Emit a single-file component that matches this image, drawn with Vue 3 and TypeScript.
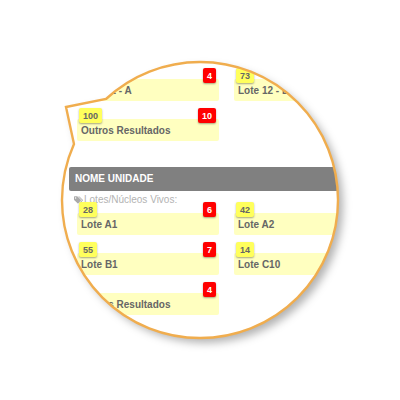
<script setup lang="ts">
interface Lot {
  name: string
  code?: number
  alerts?: number
}

const previousLots: Lot[] = [
  { name: 'Lote 12 - A', alerts: 4 },
  { name: 'Lote 12 - B', code: 73 },
  { name: 'Outros Resultados', code: 100, alerts: 10 },
]

const unitLots: Lot[] = [
  { name: 'Lote A1', code: 28, alerts: 6 },
  { name: 'Lote A2', code: 42 },
  { name: 'Lote B1', code: 55, alerts: 7 },
  { name: 'Lote C10', code: 14 },
  { name: 'Outros Resultados', alerts: 4 },
]
</script>

<template>
  <main class="page">
    <div class="bubble">
      <svg class="shadow" viewBox="0 0 280 280" aria-hidden="true">
        <path d="M46 39A138 138 0 0 1 140 2A138 138 0 0 1 278 140A138 138 0 0 1 140 278A138 138 0 0 1 2 140A138 138 0 0 1 14 84L6 47Z" fill="#fff" />
      </svg>
      <div class="content">
        <ul class="lots">
          <li v-for="lot in previousLots" :key="lot.name" class="lot">
            <span v-if="lot.code" class="badge code">{{ lot.code }}</span>
            <span v-if="lot.alerts" class="badge alerts">{{ lot.alerts }}</span>
            <span>{{ lot.name }}</span>
          </li>
        </ul>
        <section class="unit">
          <h2>NOME UNIDADE</h2>
          <p class="caption">
            <svg class="tags" viewBox="0 0 16 13" aria-hidden="true">
              <path fill-rule="evenodd" d="M0 1.2Q0 0 1.2 0H5.4Q6.2 0 6.8 .6L12.2 6Q13 6.8 12.2 7.6L7.8 12.2Q7 13 6.2 12.2L.7 6.8Q0 6.2 0 5.4ZM2.9 1.7A1.2 1.2 0 1 0 2.9 4.1A1.2 1.2 0 1 0 2.9 1.7Z" />
              <path d="M7.6 0H8.7Q9.5 0 10.1 .6L15.5 6Q16.3 6.8 15.5 7.6L11.1 12.2Q10.2 13 9.3 12L13.5 7.6Q14.2 6.8 13.5 6Z" />
            </svg>
            <span>Lotes/Núcleos Vivos:</span>
          </p>
          <ul class="lots">
            <li v-for="lot in unitLots" :key="lot.name" class="lot">
              <span v-if="lot.code" class="badge code">{{ lot.code }}</span>
              <span v-if="lot.alerts" class="badge alerts">{{ lot.alerts }}</span>
              <span>{{ lot.name }}</span>
            </li>
          </ul>
        </section>
      </div>
      <svg class="outline" viewBox="0 0 280 280" aria-hidden="true">
        <path d="M46 39A138 138 0 0 1 140 2A138 138 0 0 1 278 140A138 138 0 0 1 140 278A138 138 0 0 1 2 140A138 138 0 0 1 14 84L6 47Z" />
      </svg>
    </div>
  </main>
</template>

<style>
body {
  background: #fff;
}
</style>

<style scoped>
.page {
  display: flex;
  justify-content: center;
  padding: 60px 0;
  font-family: "Liberation Sans", Arial, sans-serif;
  font-size: 10px;
}

.bubble {
  position: relative;
  flex: none;
  width: 280px;
  height: 280px;
}

.shadow,
.outline {
  position: absolute;
  inset: 0;
  width: 100%;
  height: 100%;
  overflow: visible;
  pointer-events: none;
}

.shadow {
  filter: drop-shadow(5px 5px 4px rgba(0, 0, 0, 0.3));
}

.outline path {
  fill: none;
  stroke: #f0ad4e;
  stroke-width: 2.4;
}

.content {
  position: relative;
  box-sizing: border-box;
  height: 100%;
  padding: 19px 0 0 9px;
  clip-path: path("M46 39A138 138 0 0 1 140 2A138 138 0 0 1 278 140A138 138 0 0 1 140 278A138 138 0 0 1 2 140A138 138 0 0 1 14 84L6 47Z");
}

.lots {
  display: grid;
  grid-template-columns: 142px 142px;
  gap: 18px 15px;
  margin: 0;
  padding: 0 0 0 8px;
  list-style: none;
}

.lot {
  position: relative;
  box-sizing: border-box;
  height: 22px;
  padding: 4px 4px 0;
  border-radius: 2px;
  background: #ffffc0;
  color: #666;
  font-weight: 700;
  line-height: 15px;
  white-space: nowrap;
}

.badge {
  position: absolute;
  top: -11px;
  box-sizing: border-box;
  height: 15px;
  padding: 0 4px;
  border-radius: 2px;
  box-shadow: 0 1px 2px rgba(0, 0, 0, 0.35);
  font-size: 9px;
  line-height: 16px;
}

.code {
  left: 2px;
  background: #ffff5c;
}

.alerts {
  right: 3px;
  background: #f00;
  color: #fff;
}

.unit {
  margin-top: 26px;
}

h2 {
  margin: 0;
  padding: 0 6px;
  border-radius: 2px 0 0 2px;
  background: #808080;
  color: #fff;
  font-size: 10px;
  font-weight: 700;
  line-height: 24px;
}

.caption {
  display: flex;
  align-items: center;
  gap: 1px;
  height: 18px;
  margin: 0;
  padding: 0 0 4px 5px;
  color: #b3b3b3;
  line-height: 18px;
}

.tags {
  width: 9px;
  height: 8px;
  fill: #aaa;
}
</style>
